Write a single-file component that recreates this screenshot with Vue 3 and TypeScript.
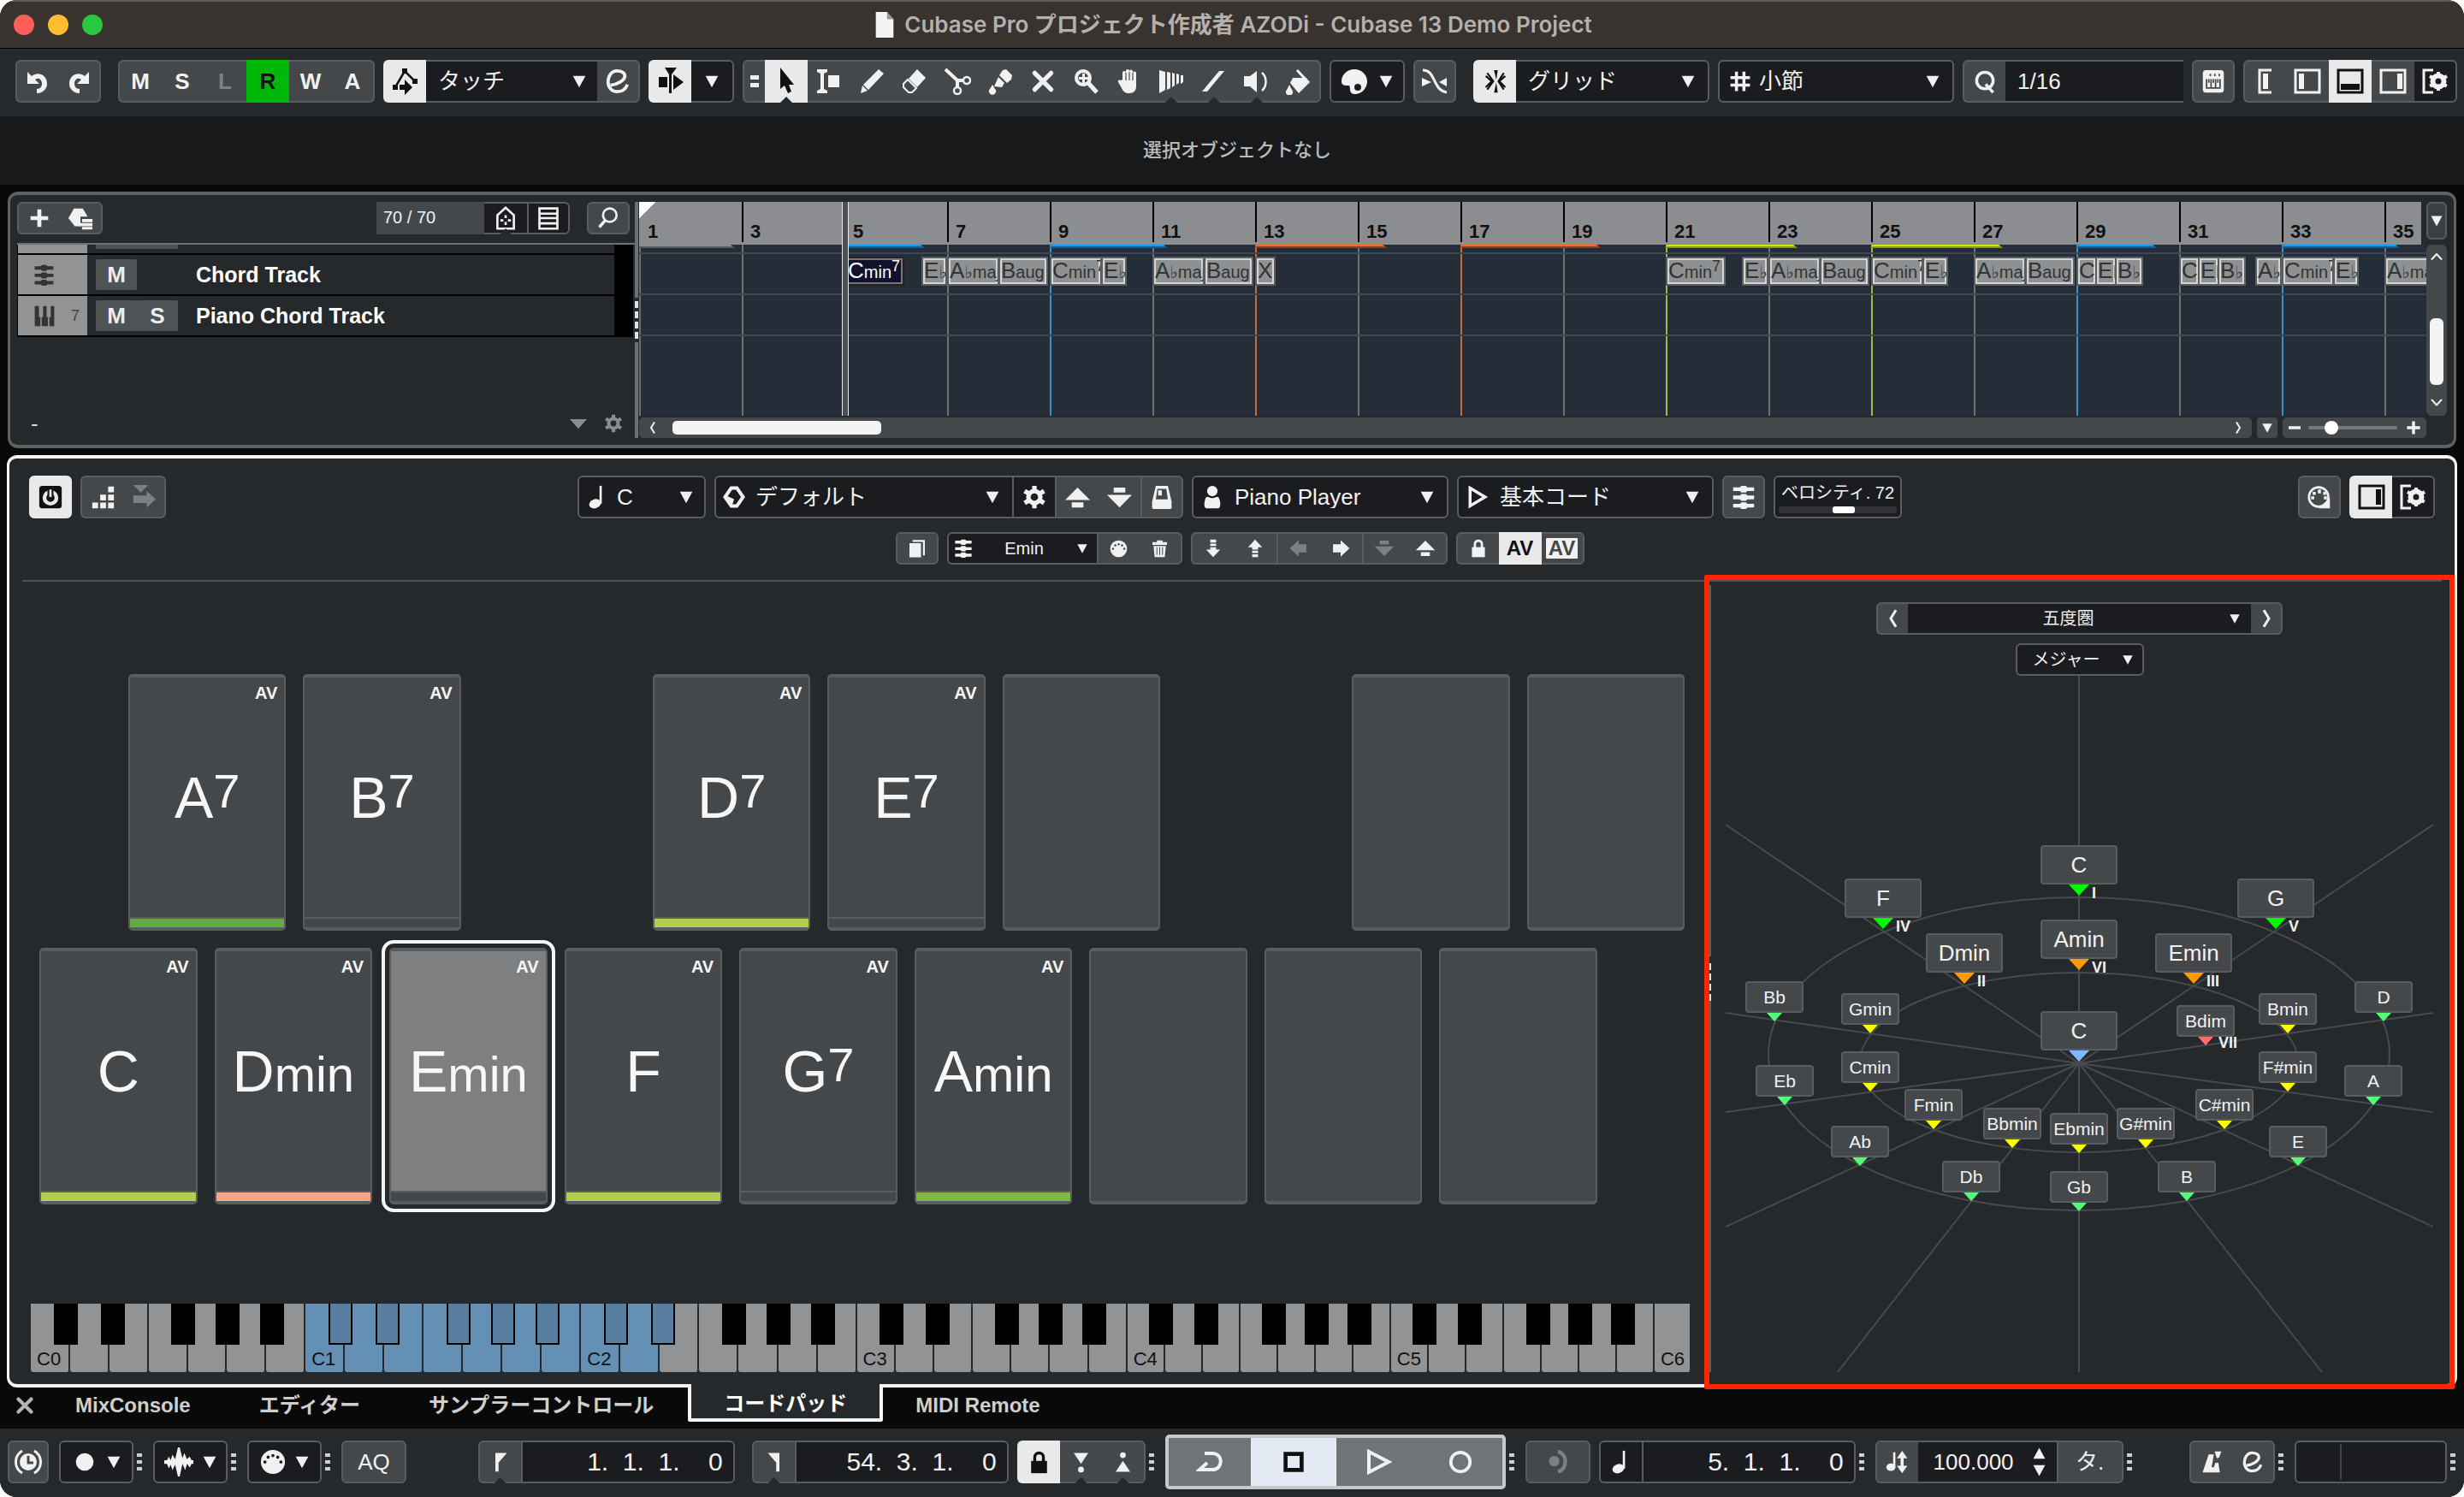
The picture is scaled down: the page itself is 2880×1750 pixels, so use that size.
<script setup lang="ts">
import { h, ref } from 'vue'

/* Icon bodies, all drawn on a 32 x 32 grid and filled with the current colour. */
const shapes: Record<string, string> = {
  undo: '<path d="M4 5v14h14l-5-5c4-3 8 0 8 5 0 3-2 6-6 6v5c7 0 12-5 12-11C27 8 16 4 9 10z"/>',
  redo: '<path d="M28 5v14H14l5-5c-4-3-8 0-8 5 0 3 2 6 6 6v5C10 30 5 25 5 19 5 8 16 4 23 10z"/>',
  automation: '<path d="M4 23 15 4l12 12" fill="none" stroke="currentColor" stroke-width="2.5"/><path d="M12 1h6v6h-6zM1 20h6v6H1zM24 13h6v6h-6zM9 20h6v-6l9 9-9 9v-6H9z"/>',
  e: '<path d="M7 21c9-1 17-6 18-11 0-5-5-7-10-7C8 3 4 10 4 17s5 12 11 12 11-3 13-9" fill="none" stroke="currentColor" stroke-width="4"/>',
  autoscroll: '<path d="M9 0h14l-6 8v22h-3V8zM2 11h10v12H2zM19 8l12 9-12 9z"/>',
  pointer: '<path d="M9 0v25l5-4 4 9 4-2-3-8h6z"/>',
  range: '<path d="M2 2h12v3l-4 2v18l4 2v3H2v-3l4-2V7L2 5zM15 9h13v14H15z"/>',
  pencil: '<path d="m24 2 6 5-18 19-6-6zM5 21l6 6-8 3z"/>',
  eraser: '<path d="m19 2 10 10-10 11L9 13z"/><path d="m8 14 10 10-5 5H9l-6-6v-4z" fill="none" stroke="currentColor" stroke-width="2"/>',
  scissors: '<path d="M2 2l14 13h7M16 15v7" fill="none" stroke="currentColor" stroke-width="4"/><circle cx="27" cy="15" r="4" fill="none" stroke="currentColor" stroke-width="2.5"/><circle cx="16" cy="27" r="4" fill="none" stroke="currentColor" stroke-width="2.5"/>',
  glue: '<path d="m19 3 4-1 7 7-1 5-5 4-9-9zM14 11l7 7-3 5-9-1zM7 20l3 5a4 4 0 1 1-6 0z"/>',
  cross: '<path d="M5 5l22 22M27 5 5 27" stroke="currentColor" stroke-width="6" stroke-linecap="round"/>',
  zoom: '<circle cx="13" cy="12" r="8" fill="none" stroke="currentColor" stroke-width="4"/><path d="m19 18 10 11" stroke="currentColor" stroke-width="5"/><path d="M12 7h3v4h4v3h-4v4h-3v-4H8v-3h4z"/>',
  hand: '<path d="M9 14V6a2 2 0 0 1 4 0V4a2 2 0 0 1 4 0v0a2 2 0 0 1 4 1v1a2 2 0 0 1 4 1v15c0 5-3 8-8 8s-7-2-9-6L4 17c-1-3 2-3 3-2z"/><path d="M13 6v9M17 5v10M21 6v9" stroke="#45484b" stroke-width="1.2"/>',
  comp: '<path d="M2 3l7 2v21l-7 4zM11 5l4 1v18l-4 2zM17 6l3 1v14l-3 2zM22 7l3 1v10l-3 2zM27 9h3v8l-3 2z"/>',
  line: '<path d="M28 4 22 4 2 28h6z"/>',
  speaker: '<path d="M1 10h7l8-6v25l-8-7H1z"/><path d="M22 6c6 5 6 16 0 21" fill="none" stroke="currentColor" stroke-width="2.5"/>',
  bucket: '<path d="M9 12h16l3 6-12 12-10-12z"/><path d="M14 3l14 15" stroke="currentColor" stroke-width="3"/><path d="M5 20l3 6a4 4 0 1 1-6 0z"/>',
  palette: '<path d="M16 2C7 2 1 9 1 16c0 5 4 5 8 5 3 0 1 5 3 8 1 2 4 2 6 2 8-1 13-8 13-15S25 2 16 2zm4 17a4 4 0 1 1 0 8 4 4 0 0 1 0-8z"/>',
  crossfade: '<path d="M2 3c8 0 10 5 14 13s7 12 14 13" fill="none" stroke="currentColor" stroke-width="3"/><path d="M1 12l11 5-11 5zM30 12l-9 5 9 5z"/>',
  snap: '<path d="M14 1h5l-2 13zM14 31h5l-2-13z"/><path d="m5 5 8 11-8 11M27 5l-7 11 7 11M3 9l8 7-8 8M29 9l-8 7 8 8" fill="none" stroke="currentColor" stroke-width="2.5"/>',
  grid: '<path d="M11 3v26M21 3v26M3 11h26M3 21h26" stroke="currentColor" stroke-width="4"/>',
  q: '<circle cx="16" cy="15" r="11" fill="none" stroke="currentColor" stroke-width="4"/><path d="m17 20 10 11" stroke="currentColor" stroke-width="4"/>',
  keypanel: '<path d="M6 1h20a4 4 0 0 1 4 4v22a4 4 0 0 1-4 4H6a4 4 0 0 1-4-4V5a4 4 0 0 1 4-4z"/><path d="M7 13v12h18V13M13 13v12M19 13v12M10 13v5M16 13v5M22 13v5" fill="none" stroke="#45484b" stroke-width="2"/><path d="M12 6v3M18 6v3M24 6v3" stroke="#45484b" stroke-width="2"/>',
  zoneL: '<path d="M23 3h-14v26h14" fill="none" stroke="currentColor" stroke-width="3"/><path d="M13 7h6v18h-6z"/>',
  zoneLeft: '<path d="M2 3h28v26H2z" fill="none" stroke="currentColor" stroke-width="3"/><path d="M6 7h6v18H6z"/>',
  zoneBottom: '<path d="M2 3h28v26H2z" fill="none" stroke="currentColor" stroke-width="3"/><path d="M5 19h22v7H5z"/>',
  zoneRight: '<path d="M2 3h28v26H2z" fill="none" stroke="currentColor" stroke-width="3"/><path d="M21 7h6v18h-6z"/>',
  setup: '<path d="M14 3H3v26h11" fill="none" stroke="currentColor" stroke-width="3"/><circle cx="20" cy="16" r="6.500" fill="none" stroke="currentColor" stroke-width="6"/><path d="M20 5v22M10 10l20 12M30 10 10 22" stroke="currentColor" stroke-width="4" stroke-dasharray="5 13"/>',
  gear: '<circle cx="16" cy="16" r="8" fill="none" stroke="currentColor" stroke-width="6"/><path d="M16 1v6M16 25v6M3 8l5 3M24 21l5 3M3 24l5-3M24 11l5-3" stroke="currentColor" stroke-width="6"/>',
  plus: '<path d="M16 5v22M5 16h22" stroke="currentColor" stroke-width="5"/>',
  preset: '<path d="M8 4h11l6 10h-9v12H9L1 16z"/><path d="M18 17h13v4H18zM14 22h17v4H14zM18 27h13v3H18z"/>',
  house: '<path d="M16 2 5 12v18h22V12z" fill="none" stroke="currentColor" stroke-width="3"/><path d="M16 12v4M16 21v4M9 19h4M19 19h4" stroke="currentColor" stroke-width="3"/>',
  list: '<path d="M4 3h24v27H4z" fill="none" stroke="currentColor" stroke-width="3"/><path d="M4 10h24M4 16h24M4 23h24" stroke="currentColor" stroke-width="3"/>',
  search: '<circle cx="18" cy="12" r="9" fill="none" stroke="currentColor" stroke-width="3"/><path d="M12 19 4 28" stroke="currentColor" stroke-width="4"/>',
  chords: '<path d="M2 3h9l2-2h6l2 2h9v5h-9l-2 2h-6l-2-2H2zM2 14h9l2-2h6l2 2h9v5h-9l-2 2h-6l-2-2H2zM2 25h9l2-2h6l2 2h9v5h-9l-2 2h-6l-2-2H2z"/>',
  piano: '<path d="M2 2h6v16h2v13H2zM12 18h2V2h5v16h2v13h-9zM23 18h2V2h5v29h-7z"/>',
  power: '<rect x="1" y="1" width="30" height="30" rx="4"/><circle cx="16" cy="17" r="8" fill="none" stroke="#e9e9e9" stroke-width="5"/><path d="M16 4v13" stroke="#17181a" stroke-width="8"/><path d="M16 6v10" stroke="#e9e9e9" stroke-width="3"/>',
  steps: '<path d="M23 1h8v8h-8zM12 12h8v8h-8zM23 12h8v8h-8zM1 23h8v8H1zM12 23h8v8h-8zM23 23h8v8h-8z"/>',
  jump: '<path d="M2 0h20l-10 10zM2 14h18V8l12 11-12 11v-6H2z"/>',
  note: '<ellipse cx="12" cy="25" rx="8" ry="6" transform="rotate(-20 12 25)"/><path d="M18 1h3v24h-3z"/>',
  diamond: '<path d="M12 3h8l9 13-9 13h-8L3 16z" fill="none" stroke="currentColor" stroke-width="5"/><path d="M5 14l11 5-3 10z"/>',
  up: '<path d="M16 4l15 15H1zM9 22h14v6H9z"/>',
  down: '<path d="M9 4h14v6H9zM1 13h30L16 28z"/>',
  device: '<path d="M8 1h16l5 21v8a2 2 0 0 1-2 2H5a2 2 0 0 1-2-2v-8z"/><path d="M10 5h12l2 14H8z" fill="#45484b"/><path d="M11 7h5v7h-5z"/>',
  player: '<circle cx="16" cy="8" r="7"/><path d="M8 16h3c3 2 7 2 10 0h3c3 4 4 15 0 15H8c-4 0-3-11 0-15z"/>',
  voicing: '<path d="M6 4l20 12L6 28z" fill="none" stroke="currentColor" stroke-width="4"/>',
  copy: '<path d="M9 3h19v24h-3V6H9zM4 8h18v22H4z"/>',
  plug: '<path fill-rule="evenodd" d="M16 1a15 15 0 1 0 0 30 15 15 0 0 0 0-30zm0 5a2 2 0 1 1 0 4 2 2 0 0 1 0-4zm-6 2a2 2 0 1 1 0 4 2 2 0 0 1 0-4zm12 0a2 2 0 1 1 0 4 2 2 0 0 1 0-4zM6 14a2 2 0 1 1 0 4 2 2 0 0 1 0-4zm20 0a2 2 0 1 1 0 4 2 2 0 0 1 0-4z"/>',
  plugIn: '<circle cx="15" cy="16" r="13" fill="none" stroke="currentColor" stroke-width="3"/><path d="M14 6h4v5h-4zM7 9h4v4H7zM21 9h4v4h-4zM5 15h4v4H5zM22 15h4v4h-4zM30 17v14H15z"/>',
  trash: '<path d="M11 1h10v3h8v5H3V4h8zM5 11h22l-2 20H7z"/><path d="M11 13v14M16 13v14M21 13v14" stroke="#45484b" stroke-width="1.5"/>',
  tensDown: '<path d="M11 1h10v5H11zM11 8h10v4H11zM11 14h10v4h7L16 31 4 18h7z"/>',
  tensUp: '<path d="M11 31h10v-5H11zM11 24h10v-4H11zM11 18h10v-4h7L16 1 4 14h7z"/>',
  left: '<path d="M1 16 16 2v7h13v14H16v7z"/>',
  right: '<path d="M31 16 16 2v7H3v14h13v7z"/>',
  lock: '<path d="M5 14h22v17H5z"/><path d="M10 15V9c0-8 12-8 12 0v6" fill="none" stroke="currentColor" stroke-width="4"/>',
  caret: '<path d="M3 5h26L16 29z"/>',
  flat: '<path d="M0 8h32L16 26z"/>',
  chevL: '<path d="M20 3 12 16l8 13" fill="none" stroke="currentColor" stroke-width="4"/>',
  chevR: '<path d="M12 3l8 13-8 13" fill="none" stroke="currentColor" stroke-width="4"/>',
  chevU: '<path d="M4 23 16 10l12 13" fill="none" stroke="currentColor" stroke-width="4"/>',
  chevD: '<path d="M4 10l12 13 12-13" fill="none" stroke="currentColor" stroke-width="4"/>',
  minus: '<path d="M2 16h28" stroke="currentColor" stroke-width="7"/>',
  doc: '<path d="M5 0h14l8 9v23H5z"/><path d="M19 0v9h8z" fill="#9a9692"/>',
  clock: '<circle cx="16" cy="16" r="10"/><path d="M16 9v8h6" fill="none" stroke="#45484b" stroke-width="3"/><path d="M9 3a15 15 0 0 0 0 26M23 3a15 15 0 0 1 0 26" fill="none" stroke="currentColor" stroke-width="3"/>',
  dot: '<circle cx="16" cy="16" r="11"/>',
  wave: '<path d="M0 14h3l2-4 2 4 2-6 3 5 3-13h2l3 12 2-6 3 7 3-3 2 4h2v4h-2l-2 4-3-4-2 7-3-7-3 14h-2l-3-13-3 6-2-6-2 4-2-5H0z"/>',
  locL: '<path d="M8 2h18L13 17v14H8z"/>',
  locR: '<path d="M24 2H6l13 15v14h5z"/>',
  punchIn: '<path d="M6 3h20L16 18z"/><circle cx="16" cy="26" r="4"/>',
  punchOut: '<path d="M6 29h20L16 14z"/><circle cx="16" cy="6" r="4"/>',
  cycle: '<path d="M10 6h9c13 0 13 19 0 19H4l9-8" fill="none" stroke="currentColor" stroke-width="4"/>',
  stop: '<path d="M6 6h20v20H6z" fill="none" stroke="currentColor" stroke-width="5"/>',
  play: '<path d="M5 4l23 12L5 28z" fill="none" stroke="currentColor" stroke-width="4"/>',
  record: '<circle cx="16" cy="16" r="12" fill="none" stroke="currentColor" stroke-width="4"/>',
  jog: '<circle cx="11" cy="15" r="7"/><path d="M16 2c13 3 13 24 0 27" fill="none" stroke="currentColor" stroke-width="5"/>',
  tempo: '<ellipse cx="7" cy="23" rx="6" ry="5"/><path d="M10 3h3v20h-3zM22 1l7 10h-5v10h5l-7 10-7-10h5V11h-5z"/>',
  metronome: '<path fill-rule="evenodd" d="M12 6h7l-3 17h3l2-6h4l2 13H4z"/><path d="M20 2h9l-3 8-3 1z"/>',
}

const Icon = (p: { n: string; s?: number }) => {
  const s = p.s ?? 28
  return h('svg', { viewBox: '0 0 32 32', width: s, height: s, fill: 'currentColor', 'aria-hidden': 'true', innerHTML: shapes[p.n] })
}

const states = ['M', 'S', 'L', 'R', 'W', 'A']
const tools = ['pointer', 'range', 'pencil', 'eraser', 'scissors', 'glue', 'cross', 'zoom', 'hand', 'comp', 'line', 'speaker', 'bucket']
const notched = ['pointer', 'comp', 'line', 'speaker']
const zones = ['zoneL', 'zoneLeft', 'zoneBottom', 'zoneRight', 'setup']

const bars = Array.from({ length: 18 }, (_, i) => i * 2 + 1)
const barTone: Record<number, string> = { 9: 'blue', 13: 'orange', 17: 'orange', 21: 'lime', 25: 'lime', 29: 'blue', 33: 'blue' }
const markers = [
  { x: 0, w: 112, tone: 'gray' },
  { x: 241, w: 93, tone: 'blue' },
  { x: 481, w: 137, tone: 'blue' },
  { x: 721, w: 153, tone: 'orange' },
  { x: 961, w: 163, tone: 'orange' },
  { x: 1201, w: 153, tone: 'lime' },
  { x: 1441, w: 153, tone: 'lime' },
  { x: 1681, w: 93, tone: 'blue' },
  { x: 1921, w: 137, tone: 'blue' },
]

interface Chord { root: string; flat?: boolean; low?: string; sup?: string }
interface ChordEvent extends Chord { x: number; w: number; on?: boolean }
const C7: Chord = { root: 'C', low: 'min', sup: '7' }
const C: Chord = { root: 'C' }
const Eb: Chord = { root: 'E', flat: true }
const Bb: Chord = { root: 'B', flat: true }
const Ab: Chord = { root: 'A', flat: true }
const AbMaj: Chord = { root: 'A', flat: true, low: 'maj' }
const Baug: Chord = { root: 'B', low: 'aug' }
const at = (c: Chord, x: number, w: number, on = false): ChordEvent => ({ ...c, x, w, on })
const events: ChordEvent[] = [
  at(C7, 241, 69, true), at(Eb, 330, 30), at(AbMaj, 360, 61), at(Baug, 420, 58),
  at(C7, 480, 61), at(Eb, 540, 30), at(AbMaj, 600, 61), at(Baug, 660, 58), at({ root: 'X' }, 720, 24),
  at(C7, 1200, 70), at(Eb, 1289, 31), at(AbMaj, 1320, 61), at(Baug, 1380, 58), at(C7, 1440, 61), at(Eb, 1500, 30),
  at(AbMaj, 1560, 61), at(Baug, 1620, 58), at(C, 1680, 24), at(Eb, 1702, 25), at(Bb, 1725, 33),
  at(C, 1800, 24), at(Eb, 1822, 25), at(Bb, 1845, 33), at(Ab, 1889, 31), at(C7, 1920, 61), at(Eb, 1980, 30), at(AbMaj, 2040, 61),
]

interface Pad { root: string; low?: string; sup?: string; color?: string; on?: boolean; empty?: boolean; gap?: boolean }
const empty: Pad = { root: '', empty: true }
const gap: Pad = { root: '', gap: true }
const topPads: Pad[] = [
  { root: 'A', sup: '7', color: '#62ac43' }, { root: 'B', sup: '7' }, gap,
  { root: 'D', sup: '7', color: '#b2cf51' }, { root: 'E', sup: '7' }, empty, gap, empty, empty,
]
const lowPads: Pad[] = [
  { root: 'C', color: '#b2cf51' }, { root: 'D', low: 'min', color: '#f9a586' }, { root: 'E', low: 'min', on: true },
  { root: 'F', color: '#b2cf51' }, { root: 'G', sup: '7' }, { root: 'A', low: 'min', color: '#7fb749' }, empty, empty, empty,
]
const padRows = [topPads, lowPads]

const octaves = [321, 322, 322, 316, 308, 308, 43].map((w, i) => ({ w, i, whites: i === 6 ? 1 : 7 }))
const blackAt = [8.3, 25.4, 51.2, 67.3, 83.4]
const whiteLit = (o: number, k: number) => o === 1 || (o === 2 && k < 2)

interface Node { t: string; x: number; y: number; big?: boolean; tone: string; deg?: string }
const nodes: Node[] = [
  { t: 'C', x: 413, y: 198, big: true, tone: 'green', deg: 'I' },
  { t: 'F', x: 184, y: 237, big: true, tone: 'green', deg: 'IV' },
  { t: 'G', x: 643, y: 237, big: true, tone: 'green', deg: 'V' },
  { t: 'Amin', x: 413, y: 285, big: true, tone: 'amber', deg: 'VI' },
  { t: 'Dmin', x: 279, y: 301, big: true, tone: 'amber', deg: 'II' },
  { t: 'Emin', x: 547, y: 301, big: true, tone: 'amber', deg: 'III' },
  { t: 'C', x: 413, y: 392, big: true, tone: 'sky' },
  { t: 'Bdim', x: 561, y: 385, tone: 'rose', deg: 'VII' },
  { t: 'Bb', x: 57, y: 357, tone: 'mint' }, { t: 'D', x: 769, y: 357, tone: 'mint' },
  { t: 'Eb', x: 69, y: 455, tone: 'mint' }, { t: 'A', x: 757, y: 455, tone: 'mint' },
  { t: 'Ab', x: 157, y: 526, tone: 'mint' }, { t: 'E', x: 669, y: 526, tone: 'mint' },
  { t: 'Db', x: 287, y: 567, tone: 'mint' }, { t: 'B', x: 539, y: 567, tone: 'mint' },
  { t: 'Gb', x: 413, y: 579, tone: 'mint' },
  { t: 'Gmin', x: 169, y: 371, tone: 'yellow' }, { t: 'Bmin', x: 657, y: 371, tone: 'yellow' },
  { t: 'Cmin', x: 169, y: 439, tone: 'yellow' }, { t: 'F#min', x: 657, y: 439, tone: 'yellow' },
  { t: 'Fmin', x: 243, y: 483, tone: 'yellow' }, { t: 'C#min', x: 583, y: 483, tone: 'yellow' },
  { t: 'Bbmin', x: 335, y: 505, tone: 'yellow' }, { t: 'G#min', x: 491, y: 505, tone: 'yellow' },
  { t: 'Ebmin', x: 413, y: 511, tone: 'yellow' },
]
const rays = [[413, 0], [413, 814], [0, 174], [827, 174], [0, 394], [827, 394], [0, 510], [827, 510], [0, 644], [827, 644], [131, 814], [697, 814]]

const tabs = ['MixConsole', 'エディター', 'サンプラーコントロール', 'コードパッド', 'MIDI Remote']
const activeTab = ref('コードパッド')
const velocity = ref(72)
const hZoom = ref(22)
</script>

<template>
  <div class="app">
    <header class="title">
      <div class="lights"><i class="r"></i><i class="y"></i><i class="g"></i></div>
      <h1><Icon n="doc" :s="30" /><span>Cubase Pro プロジェクト作成者 AZODi - Cubase 13 Demo Project</span></h1>
    </header>

    <div class="toolbar">
      <div class="group wide-after">
        <button class="cell" aria-label="Undo"><Icon n="undo" :s="32" /></button>
        <button class="cell" aria-label="Redo"><Icon n="redo" :s="32" /></button>
      </div>
      <div class="group">
        <button v-for="s in states" :key="s" class="cell letter" :class="{ dim: s === 'L', read: s === 'R' }">{{ s }}</button>
      </div>
      <div class="group">
        <button class="cell on" aria-label="Automation follows"><Icon n="automation" :s="32" /></button>
        <label class="drop touch"><select aria-label="Automation mode"><option>タッチ</option></select><Icon n="caret" :s="18" /></label>
        <button class="cell" aria-label="Automation panel"><Icon n="e" :s="30" /></button>
      </div>
      <div class="group">
        <button class="cell on" aria-label="Auto-scroll"><Icon n="autoscroll" :s="32" /></button>
        <button class="cell dark" aria-label="Auto-scroll settings"><Icon n="caret" :s="18" /></button>
      </div>
      <div class="group">
        <span class="cell grip"><i></i><i></i></span>
        <button v-for="t in tools" :key="t" class="cell" :class="{ on: t === 'pointer', notch: notched.includes(t) }" :aria-label="t"><Icon :n="t" :s="t === 'cross' ? 28 : 32" /></button>
      </div>
      <div class="group">
        <button class="cell dark color" aria-label="Colors"><Icon n="palette" :s="32" /><Icon n="caret" :s="18" /></button>
      </div>
      <div class="group wide-after">
        <button class="cell" aria-label="Snap to zero crossing"><Icon n="crossfade" :s="32" /></button>
      </div>
      <div class="group">
        <button class="cell on" aria-label="Snap"><Icon n="snap" /></button>
        <label class="drop snap"><select aria-label="Snap type"><option>グリッド</option></select><Icon n="caret" :s="18" /></label>
      </div>
      <div class="group">
        <label class="drop gridtype"><Icon n="grid" :s="28" /><select aria-label="Grid type"><option>小節</option></select><Icon n="caret" :s="18" /></label>
      </div>
      <div class="group quant">
        <button class="cell" aria-label="Quantize"><Icon n="q" /></button>
        <input class="field" aria-label="Quantize preset" value="1/16" />
      </div>
      <div class="group">
        <button class="cell" aria-label="Keyboard"><Icon n="keypanel" :s="28" /></button>
      </div>
      <div class="group">
        <button v-for="z in zones" :key="z" class="cell" :class="{ on: z === 'zoneBottom', dark: z === 'setup' }" :aria-label="z"><Icon :n="z" :s="32" /></button>
      </div>
    </div>

    <div class="info">選択オブジェクトなし</div>

    <section class="arrange">
      <div class="tracks">
        <div class="trackbar">
          <div class="group low">
            <button class="cell" aria-label="Add track"><Icon n="plus" :s="30" /></button>
            <button class="cell" aria-label="Track preset"><Icon n="preset" :s="30" /></button>
          </div>
          <div class="count">70 / 70</div>
          <div class="group low vis">
            <button class="cell dark notch" aria-label="Track visibility"><Icon n="house" :s="28" /></button>
            <button class="cell dark split" aria-label="Track list"><Icon n="list" :s="28" /></button>
          </div>
          <div class="group low find">
            <button class="cell" aria-label="Find track"><Icon n="search" :s="28" /></button>
          </div>
        </div>
        <div class="tracklist">
          <div class="track cut"><div class="kind"></div><div class="ms"><button>&nbsp;</button><button>&nbsp;</button></div></div>
          <div class="track">
            <div class="kind"><Icon n="chords" :s="25" /></div>
            <div class="ms"><button>M</button></div>
            <b>Chord Track</b>
          </div>
          <div class="track">
            <div class="kind"><Icon n="piano" :s="26" /><small>7</small></div>
            <div class="ms"><button>M</button><button>S</button></div>
            <b>Piano Chord Track</b>
          </div>
        </div>
        <div class="trackfoot">
          <span class="dash">-</span>
          <Icon n="flat" :s="20" /><Icon n="gear" :s="22" />
        </div>
      </div>
      <div class="divider"><i></i><i></i><i></i><i></i></div>
      <div class="timeline">
        <div class="tl-main">
          <div class="tl-view">
            <div class="ruler"><span v-for="b in bars" :key="b">{{ b }}</span></div>
            <div class="lanes">
              <i v-for="b in bars" :key="b" class="bar" :class="barTone[b]"></i>
              <i class="hline one"></i><i class="hline two"></i><i class="hline three"></i>
              <i v-for="m in markers" :key="m.x" class="marker" :class="m.tone" :style="{ left: m.x + 'px', width: m.w + 'px' }"></i>
              <div v-for="ev in events" :key="ev.x" class="event" :class="{ picked: ev.on }" :style="{ left: ev.x + 'px', width: ev.w + 'px' }">
                <span>{{ ev.root }}<span v-if="ev.flat" class="fl">♭</span><span v-if="ev.low" class="lo">{{ ev.low }}</span><span v-if="ev.sup" class="su">{{ ev.sup }}</span></span>
              </div>
            </div>
            <i class="playhead"></i>
          </div>
          <div class="tl-side">
            <button class="rulerdrop" aria-label="Ruler options"><Icon n="caret" :s="16" /></button>
            <div class="vscroll"><Icon n="chevU" :s="16" /><i></i><Icon n="chevD" :s="16" /></div>
          </div>
        </div>
        <div class="tl-foot">
          <div class="hscroll"><Icon n="chevL" :s="16" /><i></i><Icon n="chevR" :s="16" /></div>
          <button class="zoomdrop" aria-label="Zoom presets"><Icon n="caret" :s="14" /></button>
          <div class="hzoom"><Icon n="minus" :s="16" /><input v-model="hZoom" type="range" min="0" max="100" aria-label="Horizontal zoom" /><Icon n="plus" :s="22" /></div>
        </div>
      </div>
    </section>

    <section class="lower">
      <div class="bar1">
        <div class="cluster">
          <div class="group"><button class="cell on" aria-label="Activate"><Icon n="power" :s="28" /></button></div>
          <div class="group">
            <button class="cell" aria-label="Step input"><Icon n="steps" :s="27" /></button>
            <button class="cell faint" aria-label="Jump"><Icon n="jump" :s="28" /></button>
          </div>
        </div>
        <div class="cluster mid">
          <div class="group"><label class="drop root"><Icon n="note" :s="28" /><select aria-label="Root note"><option>C</option></select><Icon n="caret" :s="18" /></label></div>
          <div class="group">
            <label class="drop preset"><Icon n="diamond" :s="26" /><select aria-label="Preset"><option>デフォルト</option></select><Icon n="caret" :s="18" /></label>
            <button class="cell dark split" aria-label="Settings"><Icon n="gear" /></button>
            <button class="cell split" aria-label="Transpose up"><Icon n="up" :s="31" /></button>
            <button class="cell" aria-label="Transpose down"><Icon n="down" :s="31" /></button>
            <button class="cell split" aria-label="Pad layout"><Icon n="device" /></button>
          </div>
          <div class="group"><label class="drop player"><Icon n="player" :s="28" /><select aria-label="Player"><option>Piano Player</option></select><Icon n="caret" :s="18" /></label></div>
          <div class="group"><label class="drop player"><Icon n="voicing" :s="28" /><select aria-label="Voicing"><option>基本コード</option></select><Icon n="caret" :s="18" /></label></div>
          <div class="group"><button class="cell" aria-label="Chord editor"><Icon n="chords" :s="28" /></button></div>
          <label class="velocity"><span>ベロシティ. {{ velocity }}</span><input v-model="velocity" type="range" min="0" max="127" /></label>
        </div>
        <div class="cluster">
          <div class="group"><button class="cell" aria-label="MIDI input"><Icon n="plugIn" /></button></div>
          <div class="group">
            <button class="cell on" aria-label="Show assistant"><Icon n="zoneRight" :s="32" /></button>
            <button class="cell dark" aria-label="Set up"><Icon n="setup" :s="32" /></button>
          </div>
        </div>
      </div>
      <div class="bar2">
        <div class="group low"><button class="cell" aria-label="Copy"><Icon n="copy" :s="24" /></button></div>
        <div class="group low">
          <label class="drop emin"><Icon n="chords" :s="22" /><select aria-label="Pad chord"><option>Emin</option></select><Icon n="caret" :s="14" /></label>
          <button class="cell split" aria-label="MIDI"><Icon n="plug" :s="21" /></button>
          <button class="cell" aria-label="Clear pad"><Icon n="trash" :s="21" /></button>
        </div>
        <div class="group low">
          <button class="cell" aria-label="Less tension"><Icon n="tensDown" :s="22" /></button>
          <button class="cell" aria-label="More tension"><Icon n="tensUp" :s="22" /></button>
          <button class="cell split faint" aria-label="Previous voicing"><Icon n="left" :s="22" /></button>
          <button class="cell" aria-label="Next voicing"><Icon n="right" :s="22" /></button>
          <button class="cell split faint" aria-label="Octave down"><Icon n="down" :s="24" /></button>
          <button class="cell" aria-label="Octave up"><Icon n="up" :s="24" /></button>
        </div>
        <div class="group low">
          <button class="cell" aria-label="Lock"><Icon n="lock" :s="22" /></button>
          <button class="cell on av">AV</button>
          <button class="cell av"><span>AV</span></button>
        </div>
      </div>
      <div class="body">
        <div class="pads">
          <div v-for="(row, i) in padRows" :key="i" class="padrow" :class="i ? 'second' : 'first'">
            <template v-for="(p, k) in row" :key="k">
              <span v-if="p.gap"></span>
              <button v-else class="pad" :class="{ picked: p.on, blank: p.empty }" aria-label="Chord pad">
                <template v-if="!p.empty">
                  <span class="tag">AV</span>
                  <span class="name">{{ p.root }}<span v-if="p.low" class="lo">{{ p.low }}</span><span v-if="p.sup" class="su">{{ p.sup }}</span></span>
                  <i class="strip" :style="{ backgroundColor: p.color }"></i>
                </template>
              </button>
            </template>
          </div>
          <div class="keys">
            <div v-for="o in octaves" :key="o.i" class="octave" :style="{ flexGrow: o.w }">
              <span v-for="k in o.whites" :key="k" class="white" :class="{ lit: whiteLit(o.i, k - 1) }"><template v-if="k === 1">C{{ o.i }}</template></span>
              <template v-if="o.whites === 7">
                <i v-for="(b, k) in blackAt" :key="b" class="black" :class="{ lit: whiteLit(o.i, k) }" :style="{ left: b + '%' }"></i>
              </template>
            </div>
          </div>
        </div>
        <aside class="assist">
          <div class="edge"><i></i><i></i><i></i><i></i></div>
          <div class="group low mode">
            <button class="cell" aria-label="Previous"><Icon n="chevL" :s="24" /></button>
            <label class="drop"><select aria-label="Assistant mode"><option>五度圏</option></select><Icon n="caret" :s="14" /></label>
            <button class="cell" aria-label="Next"><Icon n="chevR" :s="24" /></button>
          </div>
          <div class="group low scale">
            <label class="drop"><select aria-label="Scale"><option>メジャー</option></select><Icon n="caret" :s="14" /></label>
          </div>
          <div class="circle">
            <svg class="web" viewBox="0 0 827 814" width="827" height="814">
              <line v-for="r in rays" :key="r.join()" x1="413" y1="453" :x2="r[0]" :y2="r[1]" />
              <ellipse cx="413" cy="442" rx="363" ry="183" />
              <ellipse cx="413" cy="452" rx="256" ry="105" />
            </svg>
            <div v-for="(n, i) in nodes" :key="i" class="node" :class="[n.tone, { big: n.big }]" :style="{ left: n.x + 'px', top: n.y + 'px' }">
              <button>{{ n.t }}</button>
              <i></i>
              <b v-if="n.deg">{{ n.deg }}</b>
            </div>
          </div>
        </aside>
      </div>
    </section>

    <nav class="tabs" role="tablist">
      <button class="close" aria-label="Close lower zone"><Icon n="cross" :s="22" /></button>
      <button v-for="t in tabs" :key="t" role="tab" :class="{ active: t === activeTab }" :aria-selected="t === activeTab" @click="activeTab = t">{{ t }}</button>
    </nav>

    <footer class="transport">
      <div class="group"><button class="cell" aria-label="Performance"><Icon n="clock" :s="32" /></button></div>
      <div class="group after"><button class="cell dark pair" aria-label="Record mode"><Icon n="dot" :s="30" /><Icon n="caret" :s="18" /></button></div>
      <div class="dots"><i></i><i></i><i></i></div>
      <div class="group"><button class="cell dark pair" aria-label="Audio record mode"><Icon n="wave" :s="34" /><Icon n="caret" :s="18" /></button></div>
      <div class="dots"><i></i><i></i><i></i></div>
      <div class="group"><button class="cell dark pair" aria-label="MIDI record mode"><Icon n="plug" :s="30" /><Icon n="caret" :s="18" /></button></div>
      <div class="dots"><i></i><i></i><i></i></div>
      <div class="group"><button class="cell aq">AQ</button></div>
      <div class="space a"></div>
      <div class="group after20">
        <button class="cell notch" aria-label="Go to left locator"><Icon n="locL" :s="24" /></button>
        <input class="field pos split" aria-label="Left locator" value="1.  1.  1.    0" />
      </div>
      <div class="group after10">
        <button class="cell notch" aria-label="Go to right locator"><Icon n="locR" :s="24" /></button>
        <input class="field pos split" aria-label="Right locator" value="54.  3.  1.    0" />
      </div>
      <div class="group">
        <button class="cell on" aria-label="Lock punch points"><Icon n="lock" :s="27" /></button>
        <button class="cell notch" aria-label="Punch in"><Icon n="punchIn" :s="27" /></button>
        <button class="cell notch" aria-label="Punch out"><Icon n="punchOut" :s="27" /></button>
      </div>
      <div class="dots"><i></i><i></i><i></i></div>
      <div class="play">
        <button aria-label="Cycle"><Icon n="cycle" :s="32" /></button>
        <button class="stop" aria-label="Stop"><Icon n="stop" :s="30" /></button>
        <button aria-label="Start"><Icon n="play" :s="32" /></button>
        <button aria-label="Record"><Icon n="record" :s="30" /></button>
      </div>
      <div class="dots"><i></i><i></i><i></i></div>
      <div class="group after10"><button class="cell jog faint" aria-label="Jog"><Icon n="jog" /></button></div>
      <div class="group">
        <button class="cell dark" aria-label="Time format"><Icon n="note" :s="28" /></button>
        <input class="field pos split" aria-label="Position" value="5.  1.  1.    0" />
      </div>
      <div class="dots"><i></i><i></i><i></i></div>
      <div class="group">
        <button class="cell" aria-label="Tempo track"><Icon n="tempo" /></button>
        <label class="drop tempo"><input aria-label="Tempo" value="100.000" /><span class="spin"><Icon n="caret" :s="17" /><Icon n="caret" :s="17" /></span></label>
        <button class="cell tap split">タ.</button>
      </div>
      <div class="dots"><i></i><i></i><i></i></div>
      <div class="space b"></div>
      <div class="group">
        <button class="cell" aria-label="Metronome"><Icon n="metronome" /></button>
        <button class="cell" aria-label="Click setup"><Icon n="e" :s="26" /></button>
      </div>
      <div class="dots"><i></i><i></i><i></i></div>
      <div class="group"><div class="cell dark meter"><i></i></div></div>
      <div class="dots last"><i></i><i></i><i></i></div>
    </footer>
  </div>
</template>

<style>
body { margin: 0; background: #fff; }
</style>

<style scoped>
* { box-sizing: border-box; }
.app {
  display: flex; flex-direction: column; min-height: 100vh; overflow: hidden;
  background: #090909; color: #f1f1f1; border-radius: 20px;
  font: 26px/1 "Liberation Sans", "Noto Sans CJK JP", sans-serif;
}
button, input, select { font: inherit; color: inherit; background: none; border: 0; padding: 0; margin: 0; border-radius: 0; appearance: none; min-width: 0; }
svg { flex: none; display: block; }

.title { position: relative; display: flex; align-items: center; height: 57px; padding: 0 16px; background: #393330; border-top: 2px solid #5f5b58; border-bottom: 1px solid #000; }
.lights { display: flex; gap: 16px; width: 120px; }
.lights i { width: 24px; height: 24px; border-radius: 50%; }
.lights .r { background: #ff5f57; }
.lights .y { background: #febc2e; }
.lights .g { background: #28c840; }
.title h1 { display: flex; align-items: center; justify-content: center; gap: 8px; flex: 1; margin: 0 120px 0 0; font: 600 26px/1 Inter, "Noto Sans CJK JP", sans-serif; color: #b5b0ac; }
.title h1 svg { color: #f4f4f4; }

.toolbar { display: flex; gap: 10px; height: 79px; padding: 13px 8px 0 18px; background: #25292c; }
.wide-after { margin-right: 10px; }
.group { display: flex; height: 50px; flex: none; }
.group > * { border: 0 solid #5a5c60; border-top-width: 2px; border-bottom-width: 2px; background-color: #45484b; }
.group > :first-child { border-left-width: 2px; border-top-left-radius: 6px; border-bottom-left-radius: 6px; }
.group > :last-child { border-right-width: 2px; border-top-right-radius: 6px; border-bottom-right-radius: 6px; }
.group > .split { border-left-width: 2px; }
.group > .dark, .group > .drop, .group > .field { background: #1b1c20; }
.group > .on { background: #e9e9e9; border-color: #e9e9e9; color: #111; }
.low { height: 38px; }
.cell { position: relative; display: flex; align-items: center; justify-content: center; width: 50px; flex: none; }
.letter { font-weight: 700; }
.dim { color: #7d8082; }
.faint { color: #7d8082; }
.group > .read { background: #00b80a; border-color: #00b80a; color: #111; }
.notch::after { content: ""; position: absolute; bottom: -2px; left: 50%; width: 14px; height: 7px; margin-left: -7px; background: #25292c; clip-path: polygon(50% 0, 100% 100%, 0 100%); }
.drop { display: flex; align-items: center; padding: 0 12px 0 8px; gap: 8px; }
.drop select { flex: 1; height: 100%; outline: 0; }
.touch { width: 200px; padding-left: 14px; }
.snap { width: 226px; padding-left: 14px; padding-right: 14px; }
.gridtype { width: 276px; padding: 0 14px 0 10px; }
.group > .grip { width: 26px; flex-direction: column; gap: 4px; }
.grip i { width: 10px; height: 5px; background: #f1f1f1; }
.color { width: 88px; gap: 12px; }
.group.quant { flex: 1 1 0; min-width: 0; }
.quant > .field { flex: 1 1 0; width: 0; padding-left: 14px; border-right: 0; border-radius: 0; }

.info { display: flex; align-items: center; justify-content: center; height: 80px; background: #18191b; color: #b9bbbc; font-weight: 500; font-size: 22px; padding-left: 12px; }

.arrange { display: flex; height: 300px; margin: 8px 9px 0; padding: 8px; border: solid #5f6163; border-width: 4px 3px; border-radius: 12px; background: #25292c; }
.tracks { display: flex; flex-direction: column; width: 722px; }
.trackbar { display: flex; height: 50px; border-bottom: 2px solid #6d7173; }
.count { margin-left: auto; width: 126px; height: 38px; padding-left: 8px; background: #45484b; font-size: 20px; line-height: 36px; }
.group.vis > * { border-radius: 0 6px 6px 0; }
.group.vis > :first-child { border-radius: 0; border-left: 0; }
.find { margin: 0 6px 0 20px; }
.tracklist { background: #000; margin-right: 2px; }
.track { display: flex; align-items: center; height: 46px; margin: 0 22px 2px 1px; background: #25292c; }
.track.cut { height: 10px; overflow: hidden; align-items: flex-end; }
.track.cut .ms { height: 36px; margin-bottom: 5px; }
.kind { display: flex; align-items: center; width: 81px; height: 100%; padding-left: 18px; gap: 18px; background: #929395; color: #333; }
.kind small { font-size: 18px; color: #444; }
.ms { display: flex; width: 97px; height: 36px; margin: 0 20px 0 10px; }
.ms button { width: 48px; background: #505355; color: #ececec; font-weight: 700; border-radius: 2px; }
.track b { font-size: 25px; color: #fff; }
.trackfoot { display: flex; align-items: center; gap: 20px; margin-top: auto; height: 34px; padding: 0 14px 0 16px; color: #8a8c8e; }
.dash { flex: 1; color: #d5d6d7; }
.divider { display: flex; flex-direction: column; justify-content: center; gap: 4px; width: 4px; margin-right: 1px; background: linear-gradient(#6d7173 112px, transparent 112px, transparent 164px, #6d7173 164px); }
.divider i { height: 8px; background: #e4e4e4; }
.timeline { display: flex; flex-direction: column; flex: 1; min-width: 0; gap: 2px; }
.tl-main { display: flex; height: 250px; }
.tl-view { position: relative; flex: 1; min-width: 0; overflow: hidden; }
.ruler { display: flex; height: 50px; margin-right: 6px; overflow: hidden; background: linear-gradient(135deg, #fff 14px, #8c8d90 14px); }
.ruler span { flex: none; width: 120px; height: 47px; padding: 24px 0 0 8px; border-left: 2px solid #000; color: #111; font-weight: 700; font-size: 22px; }
.ruler span:first-child { border-color: transparent; }
.lanes { position: relative; display: flex; height: 200px; background: #252e38; overflow: hidden; }
.bar { flex: none; width: 120px; border-left: 2px solid #6c7073; }
.bar.blue { border-color: #3793bf; }
.bar.orange { border-color: #c96d3f; }
.bar.lime { border-color: #a9b548; }
.hline { position: absolute; left: 0; right: 0; height: 2px; background: #41474e; }
.one { top: 9px; }
.two { top: 57px; }
.three { top: 105px; }
.marker { position: absolute; top: 0; height: 4px; clip-path: polygon(0 0, calc(100% - 5px) 0, 100% 100%, 0 100%); }
.marker.gray { background: linear-gradient(#8c8d90 50%, #595b5e 50%); }
.marker.blue { background: linear-gradient(#0a9fee 50%, #0564a0 50%); }
.marker.orange { background: linear-gradient(#f56a1d 50%, #a03908 50%); }
.marker.lime { background: linear-gradient(#cbe600 50%, #8a9c00 50%); }
.event { position: absolute; top: 14px; height: 34px; padding: 2px 0 0 1px; overflow: hidden; border: 2px solid #5b5d60; background: #8f9092; box-shadow: inset 0 0 0 2px #d3d4d6; color: #333; white-space: nowrap; line-height: 28px; }
.event > span { display: block; height: 28px; margin-top: -2px; }
.event .fl { font-family: "DejaVu Sans", sans-serif; font-size: 20px; line-height: 20px; }
.event .lo { font-size: 20px; }
.event .su { font-size: 18px; position: relative; top: -8px; }
.event.picked { background: #10112a; border-color: #222; box-shadow: inset 0 0 0 2px #777; color: #fff; }
.playhead { position: absolute; left: 237px; top: 0; bottom: 0; width: 8px; border: solid #e8e8e8; border-width: 0 1px; background: #4d5053; }
.tl-side { display: flex; flex-direction: column; gap: 6px; width: 24px; }
.rulerdrop { display: flex; align-items: center; justify-content: center; height: 44px; border: 2px solid #5a5c60; border-radius: 6px; background: #3c3f42; }
.vscroll { display: flex; flex-direction: column; align-items: center; flex: 1; padding: 6px 0 8px; border-radius: 6px; background: #45484b; }
.vscroll i { width: 16px; height: 78px; margin: auto 0 12px; border-radius: 6px; background: #f3f3f3; }
.tl-foot { display: flex; gap: 6px; height: 24px; padding-right: 24px; }
.hscroll { display: flex; align-items: center; flex: 1; padding: 0 8px 0 8px; border-radius: 5px; background: #45484b; }
.hscroll i { width: 244px; height: 16px; margin: 0 auto 0 15px; border-radius: 5px; background: #f3f3f3; }
.zoomdrop { display: flex; align-items: center; justify-content: center; width: 24px; border-radius: 4px; background: #45484b; }
.hzoom { display: flex; align-items: center; justify-content: space-between; width: 168px; padding: 0 4px 0 6px; border-radius: 5px; background: #45484b; }
.hzoom input { width: 104px; height: 4px; border-radius: 2px; background: #77797b; }
.hzoom input::-webkit-slider-thumb { appearance: none; width: 16px; height: 16px; border-radius: 50%; background: #fff; }

.lower { display: flex; flex-direction: column; flex: 1; margin: 8px 8px 0; border: solid #f5f5f5; border-width: 4px 3px; border-radius: 12px; background: #25292c; }
.bar1 { display: flex; justify-content: space-between; padding: 20px 23px 0; }
.cluster { display: flex; gap: 10px; }
.cluster.mid { margin-left: 18px; }
.root { width: 150px; }
.preset { width: 348px; padding-right: 14px; gap: 12px; }
.player { width: 300px; padding-right: 14px; gap: 12px; }
.velocity { display: flex; flex-direction: column; align-items: center; justify-content: space-between; width: 150px; height: 50px; padding: 8px 0 4px; border: 2px solid #5a5c60; border-radius: 6px; background: #1b1c20; font-size: 20px; }
.velocity input { width: 138px; height: 8px; border-radius: 3px; background: #303235; }
.velocity input::-webkit-slider-thumb { appearance: none; width: 26px; height: 8px; border-radius: 3px; background: #fff; }
.bar2 { display: flex; justify-content: center; gap: 10px; margin: 16px 0 0 18px; }
.emin { width: 175px; padding: 0 10px 0 6px; font-size: 20px; }
.emin select { text-align: center; text-align-last: center; }
.av { font-weight: 700; font-size: 24px; }
.av span { padding: 0 3px; background: #f1f1f1; color: #45484b; border-radius: 1px; }
.body { display: flex; flex: 1; margin-top: 18px; }
.body::before { content: ""; position: absolute; left: 26px; right: 26px; height: 2px; background: #4d5153; }
.pads { display: flex; flex-direction: column; flex: 1; min-width: 0; padding: 110px 15px 14px 25px; }
.padrow { display: grid; grid-template-columns: repeat(9, 1fr); gap: 20px; margin-bottom: 20px; }
.padrow.first { margin-left: 114px; margin-right: 8px; }
.padrow.second { margin-left: 10px; margin-right: 110px; }
.pad { position: relative; display: flex; flex-direction: column; height: 300px; border: solid #5a5c5f; border-width: 4px 2px; border-radius: 5px; background: #45484b; color: #f7f7f7; }
.pad.picked { background: #7e7f81; outline: 4px solid #f5f5f5; outline-offset: 5px; }
.tag { align-self: flex-end; padding: 8px 8px 0 0; font-weight: 700; font-size: 20px; line-height: 20px; }
.name { align-self: center; flex: 1; padding-top: 72px; font-size: 68px; line-height: 80px; white-space: nowrap; }
.name .lo { font-size: 58px; }
.name .su { font-size: 56px; position: relative; top: -12px; }
.strip { align-self: stretch; height: 12px; border-top: 2px solid #5a5c5f; background-color: #45484b; background-clip: padding-box; }
.keys { display: flex; height: 80px; margin-top: auto; }
.octave { position: relative; display: flex; flex: 1 1 0; min-width: 0; }
.white { flex: 1 1 0; min-width: 0; padding: 54px 0 0 7px; border-right: 2px solid #25292c; border-radius: 0 0 3px 3px; background: #929395; color: #111; font-size: 22px; white-space: nowrap; }
.white.lit { background: #6590b5; }
.black { position: absolute; top: 0; width: 28px; height: 48px; background: #000; }
.black.lit { background: #587f9f; border: solid #000; border-width: 0 2px 2px; }

.assist { position: relative; display: flex; flex-direction: column; align-items: center; width: 877px; flex: none; padding-top: 26px; }
.assist::after { content: ""; position: absolute; inset: -6px 0 -6px; border: 6px solid #ff2600; border-radius: 2px; pointer-events: none; }
.edge { position: absolute; left: 6px; top: 6px; bottom: 14px; width: 2px; padding-top: 442px; background: linear-gradient(#5d6062 434px, transparent 434px, transparent 484px, #5d6062 484px); }
.edge i { display: block; height: 8px; margin-bottom: 4px; background: #e4e4e4; }
.mode { width: 475px; font-size: 20px; }
.mode .cell { width: 37px; }
.mode .drop { flex: 1; }
.mode select { text-align: center; text-align-last: center; }
.scale { width: 150px; margin-top: 10px; font-size: 20px; }
.scale .drop { flex: 1; padding-left: 18px; padding-right: 10px; }
.circle { position: relative; width: 827px; height: 814px; }
.web { stroke: #484b4d; stroke-width: 2; fill: none; }
.node { position: absolute; width: 68px; margin-left: -34px; font-size: 21px; }
.node.big { width: 90px; margin-left: -45px; font-size: 26px; }
.node button { display: block; width: 100%; height: 37px; padding-bottom: 1px; border: 2px solid #5a5c60; border-radius: 4px; background: #45484b; white-space: nowrap; }
.node.big button { height: 46px; }
.node i { display: block; width: 18px; height: 10px; margin: 0 auto; clip-path: polygon(0 0, 100% 0, 50% 100%); }
.node.big i { width: 24px; height: 13px; }
.node b { position: absolute; left: calc(50% + 15px); bottom: -6px; font-size: 18px; }
.green i { background: #00f800; }
.amber i { background: #ff9b00; }
.sky i { background: #7eb6ff; }
.rose i { background: #ff6e6e; }
.mint i { background: #55fb78; }
.yellow i { background: #fdfd00; }

.tabs { display: flex; height: 48px; font-weight: 700; font-size: 24px; color: #cfcfcf; }
.tabs button { padding: 0 40px; height: 44px; margin-top: -4px; padding-top: 6px; }
.tabs .close { padding: 6px 8px 0 18px; color: #b4b4b4; }
.tabs .active { position: relative; padding: 6px 38px 0; margin-right: -2px; border: solid #f5f5f5; border-width: 0 4px 4px; border-radius: 0 0 3px 3px; background: #25292c; color: #fff; }

.transport { display: flex; align-items: center; height: 80px; padding: 0 0 2px 9px; background: #25292c; }
.transport > .group:first-child { margin-right: 12px; }
.transport > .group:first-child .cell { width: 48px; }
.pair { width: 87px; gap: 10px; }
.dots { display: flex; flex-direction: column; gap: 4px; width: 23px; padding-left: 4px; flex: none; }
.dots.last { width: 20px; }
.dots i { width: 6px; height: 4px; background: #cfd0d1; }
.aq { width: 76px; }
.space.a { flex: 86; }
.space.b { flex: 56; }
.after20 { margin-right: 20px; }
.after10 { margin-right: 10px; }
.pos { width: 250px; padding-right: 12px; text-align: right; font-size: 30px; }
.play { display: flex; width: 398px; height: 64px; border: 4px solid #c6c8ca; border-radius: 5px; background: #717476; }
.play button { display: flex; align-items: center; justify-content: center; flex: 1; }
.play .stop { flex: 0 0 100px; background: #e3eaf3; color: #111; }
.jog { width: 76px; }
.tempo { width: 162px; padding: 0 12px 0 18px; }
.tempo input { flex: 1; width: 96px; }
.spin { display: flex; flex-direction: column; gap: 2px; }
.spin svg:first-child { transform: rotate(180deg); }
.tap { width: 78px; }
.meter { width: 178px; }
.meter i { width: 2px; height: 42px; margin-left: -70px; background: #3f4245; }
</style>
